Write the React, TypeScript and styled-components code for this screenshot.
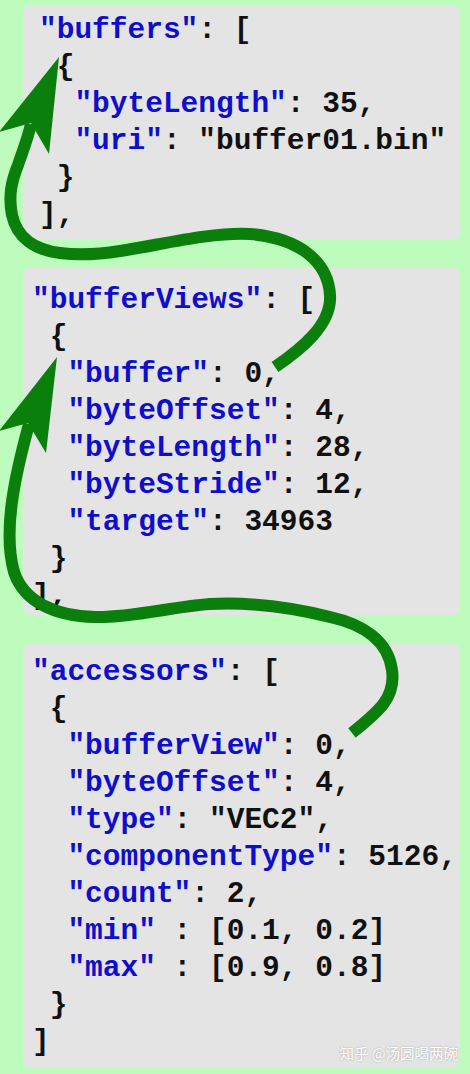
import React from "react";
import styled, { createGlobalStyle } from "styled-components";

const Global = createGlobalStyle`
  html, body { margin: 0; padding: 0; background: #bdfcbd; }
  body { width: 470px; height: 1074px; overflow: hidden; }
`;

const Page = styled.div`
  position: relative;
  width: 470px;
  height: 1074px;
  box-sizing: border-box;
  padding: 5px 10px 0 23px;
  display: flex;
  flex-direction: column;
  gap: 27.5px;
  background: #bdfcbd;
`;

const Panel = styled.div<{ $pt: number; $pb: number; $pl: number }>`
  position: relative;
  background: #e4e4e4;
  border-radius: 8px;
  padding: ${(p) => p.$pt}px 0 ${(p) => p.$pb}px ${(p) => p.$pl}px;
  font-family: "Liberation Mono", "Courier New", monospace;
  font-weight: 700;
  font-size: 29.5px;
  line-height: 37px;
  color: #111;
`;

const Line = styled.div<{ $indent: number }>`
  white-space: pre;
  padding-left: ${(p) => p.$indent}ch;
  height: 37px;
`;

const Key = styled.span`
  color: #0e0ecc;
`;

const Watermark = styled.div`
  position: absolute;
  right: 2px;
  bottom: 5px;
  font-family: "Noto Sans CJK SC", "Noto Sans", sans-serif;
  font-weight: 400;
  font-size: 14.5px;
  line-height: 20px;
  color: #ffffff;
  text-shadow: 0 0 2px rgba(0, 0, 0, 0.3);
`;

const Overlay = styled.svg`
  position: absolute;
  left: 0;
  top: 0;
  width: 470px;
  height: 1074px;
  pointer-events: none;
`;

type Row = [number, string, string];

const buffers: Row[] = [
  [0, '"buffers"', ": ["],
  [1, "", "{"],
  [2, '"byteLength"', ": 35,"],
  [2, '"uri"', ': "buffer01.bin"'],
  [1, "", "}"],
  [0, "", "],"],
];

const bufferViews: Row[] = [
  [0, '"bufferViews"', ": ["],
  [1, "", "{"],
  [2, '"buffer"', ": 0,"],
  [2, '"byteOffset"', ": 4,"],
  [2, '"byteLength"', ": 28,"],
  [2, '"byteStride"', ": 12,"],
  [2, '"target"', ": 34963"],
  [1, "", "}"],
  [0, "", "],"],
];

const accessors: Row[] = [
  [0, '"accessors"', ": ["],
  [1, "", "{"],
  [2, '"bufferView"', ": 0,"],
  [2, '"byteOffset"', ": 4,"],
  [2, '"type"', ': "VEC2",'],
  [2, '"componentType"', ": 5126,"],
  [2, '"count"', ": 2,"],
  [2, '"min"', " : [0.1, 0.2]"],
  [2, '"max"', " : [0.9, 0.8]"],
  [1, "", "}"],
  [0, "", "]"],
];

const Code: React.FC<{ rows: Row[] }> = ({ rows }) => (
  <>
    {rows.map(([indent, key, rest], i) => (
      <Line key={i} $indent={indent}>
        {key && <Key>{key}</Key>}
        {rest}
      </Line>
    ))}
  </>
);

const ARROW = "#0b7f0b";

const Arrows: React.FC = () => (
  <Overlay viewBox="0 0 470 1074">
    <path
      d="M275,367 C300,350 332,325 330,295 C328,262 300,238 250,234 C210,232 160,245 120,251 C95,255 75,255 60,253 C35,250 17,238 12,215 C8,195 12,180 18,165 C23,150 28,138 31,124"
      fill="none"
      stroke={ARROW}
      strokeWidth={12}
    />
    <polygon points="59,57 49,154 31,123 -1,132" fill={ARROW} />
    <path
      d="M352,733 C378,712 396,698 392,670 C388,640 362,624 330,617 C290,607 250,602 210,604 C170,607 130,618 95,617 C55,616 24,602 14,572 C8,550 9,520 13,495 C16,475 22,450 29,424"
      fill="none"
      stroke={ARROW}
      strokeWidth={12}
    />
    <polygon points="57,357 46,453 28,423 -1,431" fill={ARROW} />
  </Overlay>
);

export default function App() {
  return (
    <>
      <Global />
      <Page>
        <Panel $pt={7} $pb={5.5} $pl={16}>
          <Code rows={buffers} />
        </Panel>
        <Panel $pt={15} $pb={0} $pl={9}>
          <Code rows={bufferViews} />
        </Panel>
        <Panel $pt={11.5} $pb={6.5} $pl={9}>
          <Code rows={accessors} />
          <Watermark>知乎 @汤圆喝两碗</Watermark>
        </Panel>
        <Arrows />
      </Page>
    </>
  );
}
